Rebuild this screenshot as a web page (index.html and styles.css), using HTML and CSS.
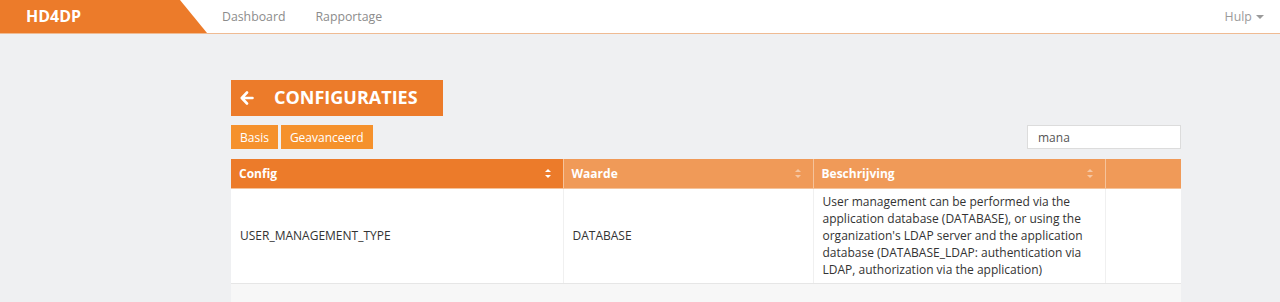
FILE: index.html
```html
<!DOCTYPE html>
<html lang="nl">
<head>
    <meta charset="UTF-8">
    <title>HD4DP - Configuraties</title>
    <link rel="stylesheet" href="styles.css">
</head>
<body>
    <nav class="navbar">
        <div class="brand">HD4DP</div>
        <ul class="nav-links">
            <li><a href="#">Dashboard</a></li>
            <li><a href="#">Rapportage</a></li>
        </ul>
        <div class="nav-right">
            <a href="#" class="dropdown">Hulp <span class="caret"></span></a>
        </div>
    </nav>

    <main class="page">
        <div class="title-box">
            <svg class="back-icon" width="14" height="14" viewBox="0 0 14 14">
                <path d="M7 1.5 L1.8 7 L7 12.5 M2 7 H12.5" fill="none" stroke="#fff" stroke-width="2.6" stroke-linecap="round" stroke-linejoin="round"/>
            </svg>
            <h1>CONFIGURATIES</h1>
        </div>

        <div class="toolbar">
            <div class="tabs">
                <button class="tab-btn">Basis</button>
                <button class="tab-btn">Geavanceerd</button>
            </div>
            <input class="search" type="text" value="mana">
        </div>

        <table class="config-table">
            <colgroup>
                <col style="width: 332px">
                <col style="width: 250px">
                <col style="width: 292px">
                <col style="width: 76px">
            </colgroup>
            <thead>
                <tr>
                    <th class="sorted">Config <span class="sort-icon"></span></th>
                    <th>Waarde <span class="sort-icon"></span></th>
                    <th>Beschrijving <span class="sort-icon"></span></th>
                    <th></th>
                </tr>
            </thead>
            <tbody>
                <tr>
                    <td>USER_MANAGEMENT_TYPE</td>
                    <td>DATABASE</td>
                    <td>User management can be performed via the application database (DATABASE), or using the organization's LDAP server and the application database (DATABASE_LDAP: authentication via LDAP, authorization via the application)</td>
                    <td></td>
                </tr>
            </tbody>
        </table>
        <div class="table-footer"></div>
    </main>
</body>
</html>
```

FILE: styles.css
```css
* {
    margin: 0;
    padding: 0;
    box-sizing: border-box;
}

body {
    font-family: 'Open Sans', 'Liberation Sans', sans-serif;
    font-size: 12px;
    line-height: 1.42857;
    color: #333;
    background: #eff0f2;
    height: 100vh;
    overflow: hidden;
}

.navbar {
    display: flex;
    align-items: center;
    height: 34px;
    background: #fff;
    border-bottom: 1px solid #efbb93;
}

.brand {
    align-self: stretch;
    width: 207px;
    padding-left: 26px;
    display: flex;
    align-items: center;
    background: #ec7b2a;
    clip-path: polygon(0 0, 180px 0, 207px 100%, 0 100%);
    color: #fff;
    font-size: 16px;
    font-weight: 700;
}

.nav-links {
    display: flex;
    list-style: none;
}

.nav-links a,
.nav-right a {
    display: block;
    padding: 0 15px;
    color: #8c8c8c;
    font-size: 12.3px;
    text-decoration: none;
}

.nav-right {
    margin-left: auto;
}

.nav-right a {
    padding-right: 16px;
    color: #9a9a9a;
}

.caret {
    display: inline-block;
    width: 0;
    height: 0;
    margin-left: 1px;
    vertical-align: middle;
    border-top: 4px solid #9a9a9a;
    border-left: 4px solid transparent;
    border-right: 4px solid transparent;
}

.page {
    width: 950px;
    margin-left: 231px;
    padding-top: 46px;
}

.title-box {
    display: flex;
    align-items: center;
    width: 212px;
    height: 36px;
    padding-left: 9px;
    background: #ec7b2a;
    color: #fff;
}

.back-icon {
    margin-right: 20px;
}

.title-box h1 {
    font-size: 18px;
    font-weight: 700;
}

.toolbar {
    display: flex;
    justify-content: space-between;
    align-items: center;
    margin-top: 9px;
    margin-bottom: 10px;
}

.tabs {
    display: flex;
    gap: 3px;
}

.tab-btn {
    height: 24px;
    padding: 0 9px;
    border: none;
    background: #f5912c;
    color: #fff;
    font-family: inherit;
    font-size: 12px;
}

.search {
    width: 154px;
    height: 24px;
    padding: 0 10px;
    border: 1px solid #dcdcdc;
    background: #fff;
    color: #555;
    font-family: inherit;
    font-size: 12px;
    outline: none;
}

.config-table {
    width: 950px;
    table-layout: fixed;
    border-collapse: collapse;
    background: #fff;
}

.config-table th {
    position: relative;
    height: 29px;
    padding: 4px 8px;
    text-align: left;
    background: #f09a58;
    color: #fff;
    font-weight: 700;
    border-left: 1px solid #f5c39b;
    border-bottom: 1px solid #f5c39b;
}

.config-table th:first-child {
    border-left: none;
}

.config-table th.sorted {
    background: #ec7b2a;
}

.sort-icon {
    position: absolute;
    right: 12px;
    top: 10px;
    width: 6px;
    height: 9px;
    opacity: 0.45;
}

.sorted .sort-icon {
    opacity: 1;
}

.sort-icon::before,
.sort-icon::after {
    content: '';
    position: absolute;
    left: 0;
    border-left: 3px solid transparent;
    border-right: 3px solid transparent;
}

.sort-icon::before {
    top: 0;
    border-bottom: 3px solid #fff;
}

.sort-icon::after {
    bottom: 0;
    border-top: 3px solid #fff;
}

.config-table td {
    padding: 4px 8px 5px 9px;
    vertical-align: middle;
    border-left: 1px solid #f0f0f0;
    border-bottom: 1px solid #e6e6e6;
    color: #333;
}

.config-table td:first-child {
    border-left: none;
}

.table-footer {
    height: 20px;
    background: #f7f7f7;
}
```
